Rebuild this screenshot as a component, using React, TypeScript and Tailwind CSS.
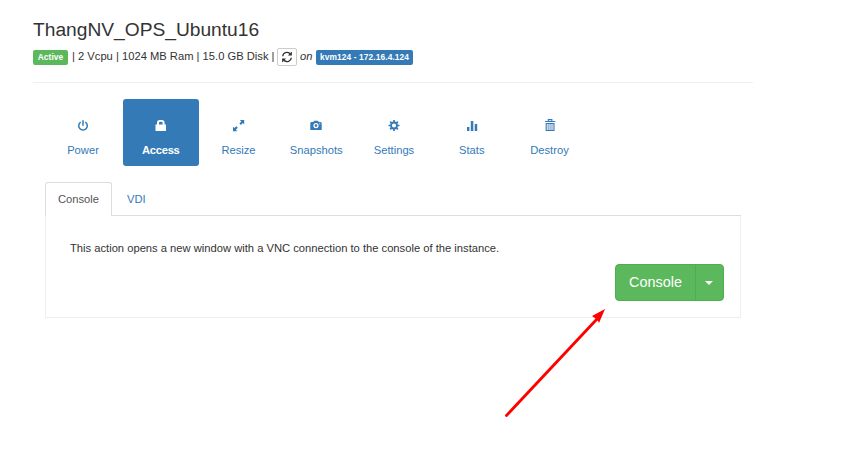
import React from "react";

const icons: Record<string, React.ReactNode> = {
  Power: (
    <g fill="none" stroke="currentColor" strokeWidth="1.5">
      <path d="M3.7 2.1a4.3 4.3 0 1 0 4.6 0" />
      <path d="M6 .2v5.6" />
    </g>
  ),
  Access: <path fillRule="evenodd" d="M.5 4.5H2V3.2A3 3 0 0 1 5 0h1.6a3 3 0 0 1 3 3.2v1.3h1.4V11H.5zM4 4.5h3.6V3.2a1.3 1.3 0 0 0-1.3-1.4h-1A1.3 1.3 0 0 0 4 3.2z" />,
  Resize: (
    <path d="M6.8 0h4.4v4.4L9.8 3.1 7.9 4.9 6.4 3.4l1.9-1.9zM0 11.2V6.8l1.4 1.3 1.9-1.8 1.5 1.5-1.9 1.9 1.5 1.5z" />
  ),
  Snapshots: (
    <path fillRule="evenodd" d="M.3 2.7 1.3 2h1.9l1-1.3h3.6l1 1.3h1.9l1 .7V10H.3zM6 3a2.6 2.6 0 1 0 0 5.2A2.6 2.6 0 0 0 6 3zm0 1.3a1.3 1.3 0 1 1 0 2.6 1.3 1.3 0 0 1 0-2.6zm3.3-1.1v1h1v-1z" />
  ),
  Settings: (
    <g fill="none" stroke="currentColor">
      <circle cx="6" cy="5.5" r="3" strokeWidth="1.8" />
      <path strokeWidth="1.7" d="M6 0v2M6 9v2M.5 5.5h2M9.5 5.5h2M2.2 1.7l1.4 1.4M8.4 7.9l1.4 1.4M9.8 1.7 8.4 3.1M3.6 7.9l-1.4 1.4" />
    </g>
  ),
  Stats: <path d="M1 7h2.4v4H1zM4.8 1h2.5v10H4.8zM8.7 4h2.5v7H8.7z" />,
  Destroy: (
    <g fill="none" stroke="currentColor">
      <path d="M1 1.5h10.3M4.3 1.5V-.4h3.6v1.9" strokeWidth="1.1" />
      <path d="M2.2 3.5h7.8v7H2.2z" strokeWidth="1.1" />
      <path d="M4.2 3.5v7M6.1 3.5v7M8 3.5v7" strokeWidth=".8" />
    </g>
  ),
};

function Action({ name, active = false }: { name: string; active?: boolean }) {
  return (
    <a
      className={
        "flex h-[67px] w-[76px] flex-col items-center rounded-[3px] pt-[21px] " +
        (active ? "bg-[#337ab7] font-bold text-white" : "text-[#337ab7]")
      }
    >
      <svg className="overflow-visible" width="12" height="12" viewBox="0 0 12 12" fill="currentColor">
        {icons[name]}
      </svg>
      <span className={"mt-[10px] leading-4 " + (active ? "tracking-[-0.25px]" : "")}>{name}</span>
    </a>
  );
}

export default function App() {
  return (
    <main className="relative h-[459px] w-[848px] overflow-hidden bg-white pl-[33px] pt-[17px] font-['Liberation_Sans',Arial,sans-serif] text-[11.2px] text-[#333]">
      <h1 className="h-[26px] text-[19.2px] leading-[26px]">ThangNV_OPS_Ubuntu16</h1>
      <div className="mt-[5px] flex h-[18px] items-center whitespace-pre leading-4">
        <span className="mt-px flex h-[15px] w-[35px] items-center justify-center rounded-[2px] bg-[#5cb85c] pb-px text-[8.4px] font-bold tracking-[0.1px] text-white">Active</span>
        <span className="-mt-[2px] ml-[4px] w-[202px]">| 2 Vcpu | 1024 MB Ram | 15.0 GB Disk |</span>
        <button className="ml-[3px] flex h-[18px] w-5 items-center justify-center rounded-[2px] border border-[#ccc] pb-px">
          <svg width="12" height="12" viewBox="0 0 12 12" fill="#333">
            <path fill="none" stroke="#333" strokeWidth="1.4" d="M1.7 5.2C2 1.8 6 .1 9 2.6M10.3 6.8C10 10.2 6 11.9 3 9.4" />
            <path d="M10.9.6v4H6.9zM1.1 11.4v-4h4z" />
          </svg>
        </button>
        <em className="-mt-[2px] ml-[3px] w-4">on</em>
        <span className="mt-px flex h-[15px] w-[97px] items-center justify-center rounded-[2px] bg-[#337ab7] pb-px text-[8.4px] font-bold tracking-[0.1px] text-white">kvm124 - 172.16.4.124</span>
      </div>
      <hr className="mt-4 w-[720px] border-[#eee]" />
      <nav className="ml-3 mt-4 flex gap-[1.75px]">
        <Action name="Power" />
        <Action name="Access" active />
        <Action name="Resize" />
        <Action name="Snapshots" />
        <Action name="Settings" />
        <Action name="Stats" />
        <Action name="Destroy" />
      </nav>
      <section className="ml-3 mt-4 w-[696px]">
        <div className="flex h-[34px] border-b border-[#ddd]">
          <a className="h-[34px] w-[67px] rounded-t-[3px] border border-b-0 border-[#ddd] bg-white pl-3 pt-2 leading-4 text-[#555]">Console</a>
          <a className="ml-[15px] pt-[9px] leading-4 text-[#337ab7]">VDI</a>
        </div>
        <div className="h-[102px] border border-t-0 border-[#eee] pl-6 pt-6">
          <p className="leading-4">This action opens a new window with a VNC connection to the console of the instance.</p>
          <div className="ml-[545px] mt-2 flex h-[37px] w-[109px] rounded-[4px] border border-[#4cae4c] bg-[#5cb85c] text-white">
            <button className="w-20 border-r border-[#4cae4c] text-[14.4px]">Console</button>
            <button className="flex flex-1 items-center justify-center pr-px">
              <svg width="8" height="4" viewBox="0 0 8 4" fill="currentColor"><path d="M0 0h8L4 4z" /></svg>
            </button>
          </div>
        </div>
      </section>
      <svg className="absolute left-[500px] top-[300px]" width="120" height="125" viewBox="0 0 120 125">
        <path d="M6.5 115.5 97 19" fill="none" stroke="#f00" strokeWidth="2.8" strokeLinecap="round" />
        <path d="M105 9 92 16l3.5 2.5L98 21l1 2z" fill="#f00" />
      </svg>
    </main>
  );
}
